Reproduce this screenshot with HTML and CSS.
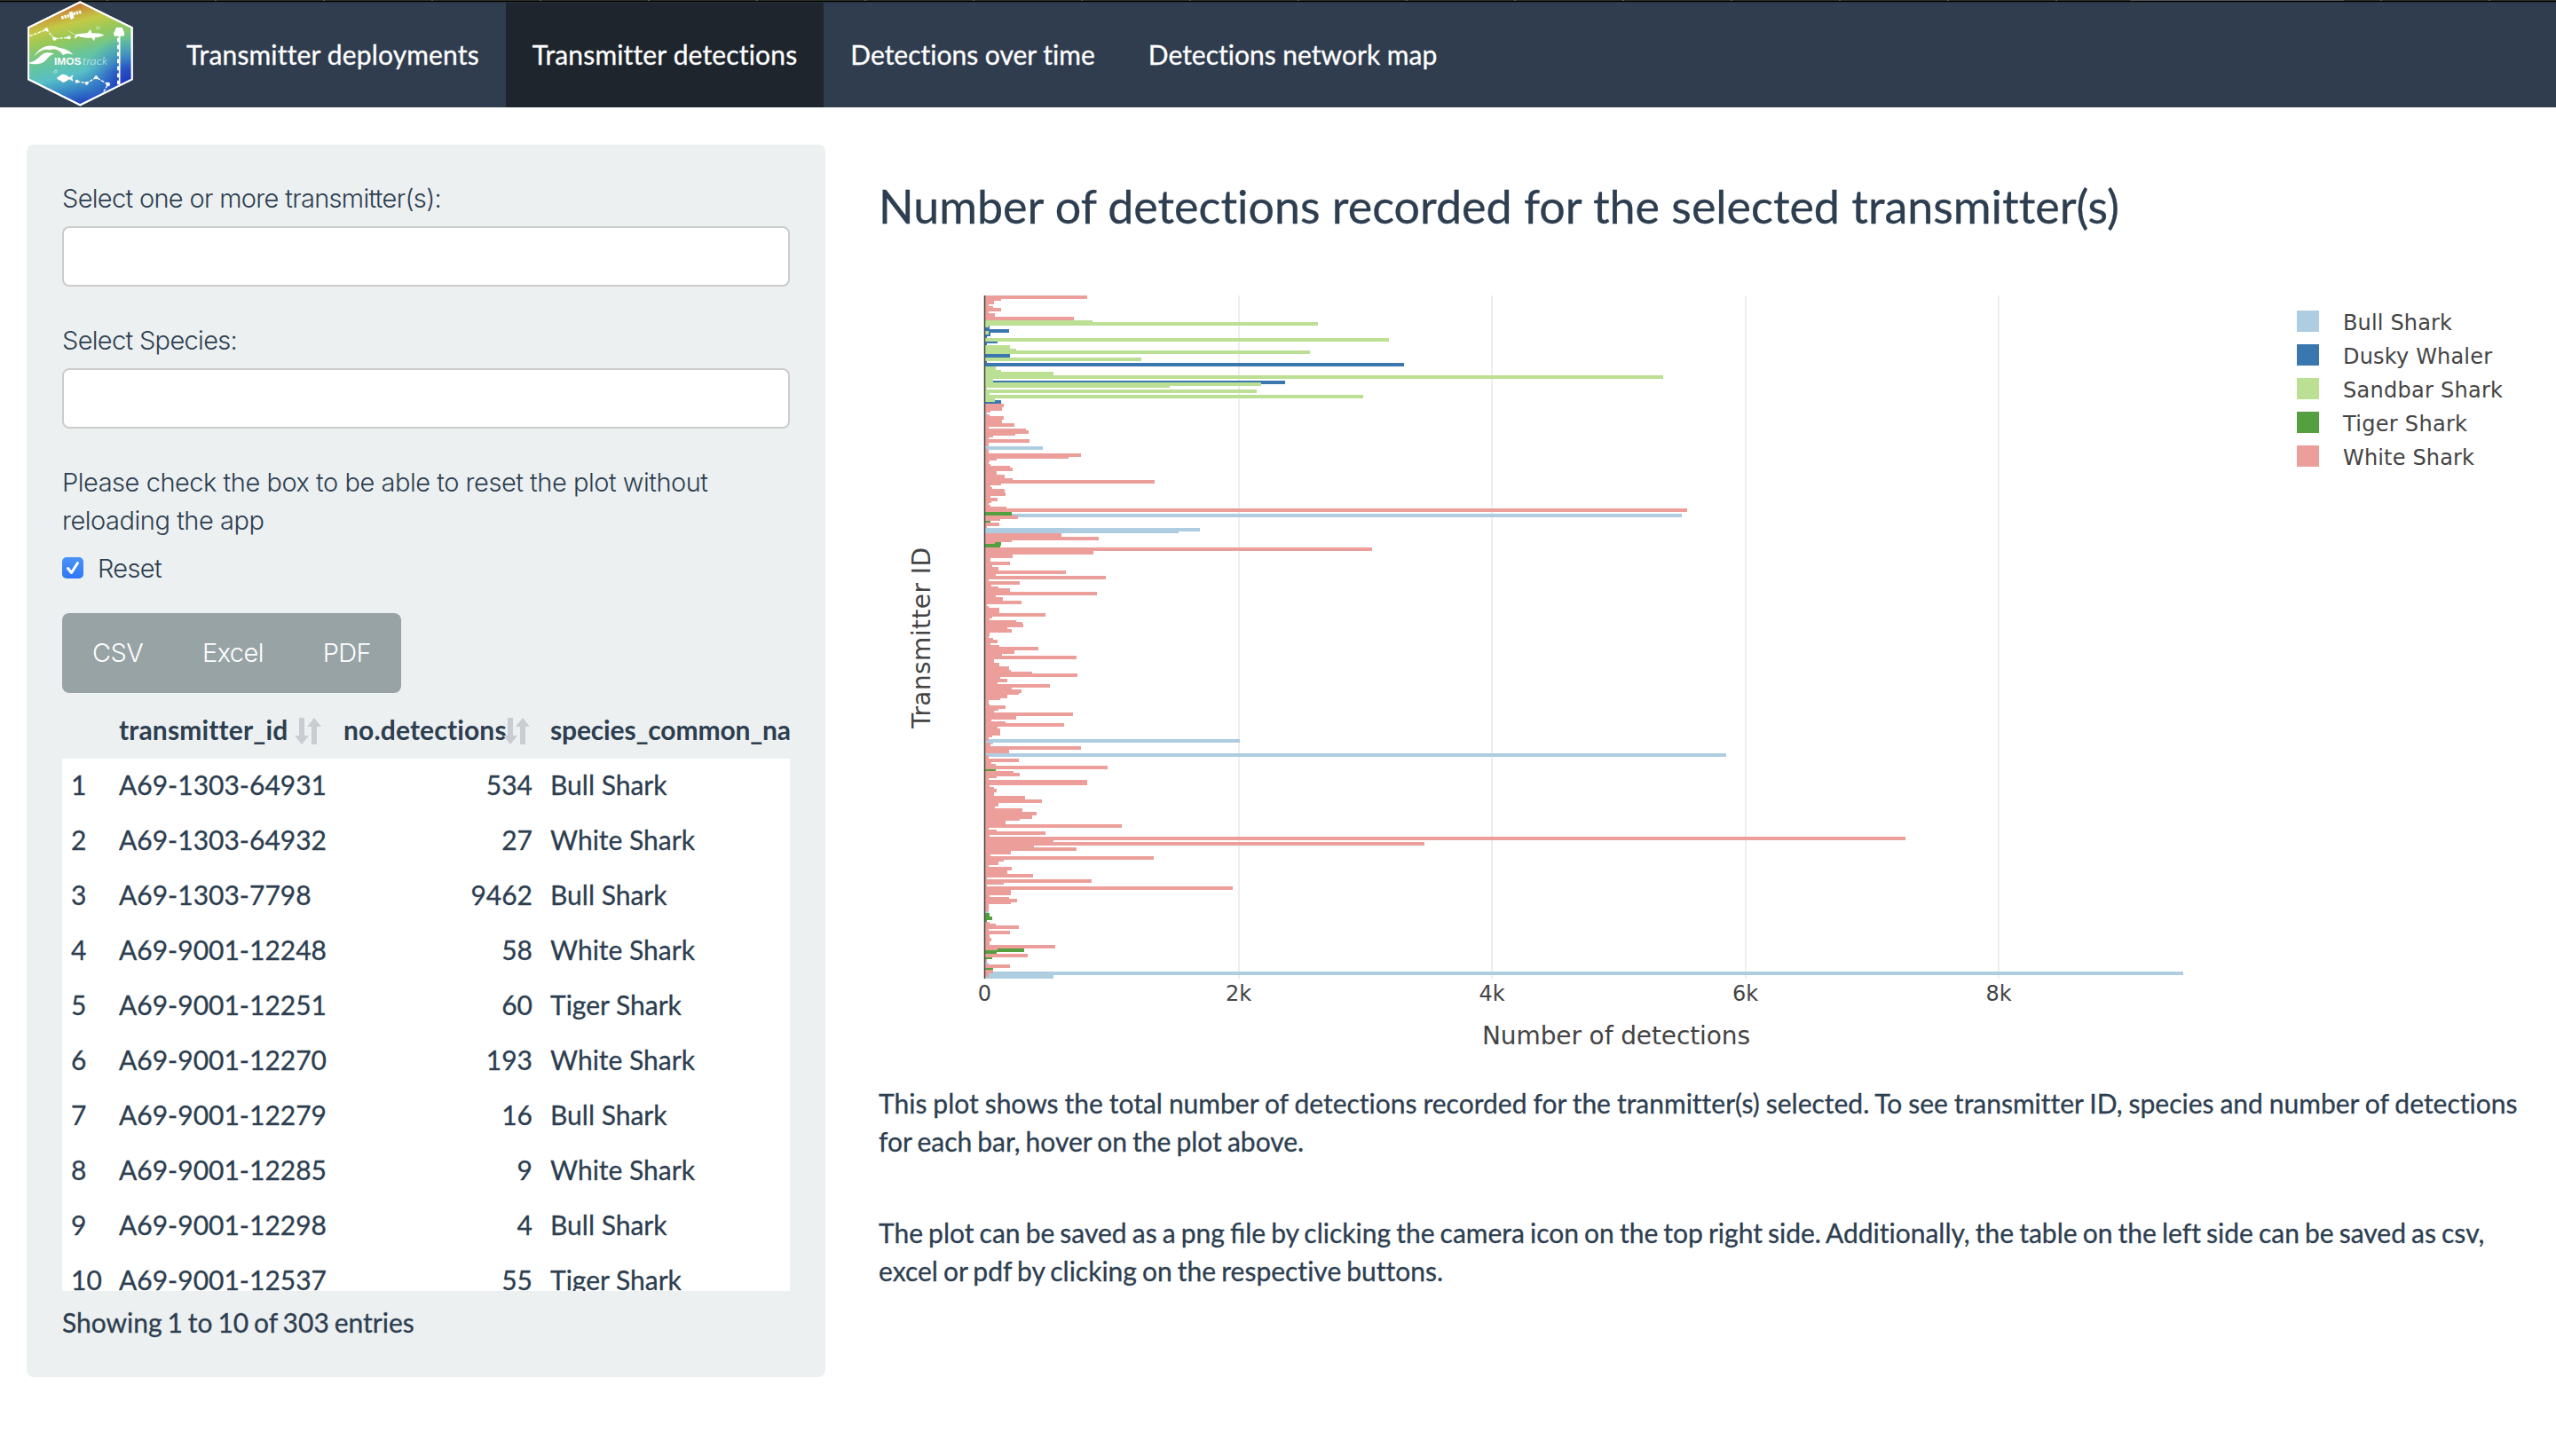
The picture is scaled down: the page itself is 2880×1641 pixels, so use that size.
FILE: index.html
```html
<!DOCTYPE html>
<html lang="en">
<head>
<meta charset="utf-8">
<title>IMOS track</title>
<link rel="stylesheet" href="styles.css">
</head>
<body>
<div class="strip"></div>
<nav class="navbar">
  <a class="brand" href="#">
    <svg class="logo" viewBox="0 0 420 360" role="img" aria-label="IMOS track">
      <defs>
        <linearGradient id="sea" x1="0.42" y1="0" x2="0.68" y2="1">
          <stop offset="0" stop-color="#c5602c"/>
          <stop offset="0.1" stop-color="#c9a03c"/>
          <stop offset="0.19" stop-color="#c3c946"/>
          <stop offset="0.33" stop-color="#93c85c"/>
          <stop offset="0.5" stop-color="#66c59c"/>
          <stop offset="0.66" stop-color="#58bfc6"/>
          <stop offset="0.82" stop-color="#347fc6"/>
          <stop offset="0.95" stop-color="#2140c0"/>
          <stop offset="1" stop-color="#1d36b8"/>
        </linearGradient>
        <radialGradient id="deep" gradientUnits="userSpaceOnUse" cx="385" cy="285" r="170">
          <stop offset="0" stop-color="#1c2cbc"/>
          <stop offset="0.35" stop-color="#2349c2" stop-opacity="0.85"/>
          <stop offset="1" stop-color="#3a8cc8" stop-opacity="0"/>
        </radialGradient>
      </defs>
      <path class="hex" fill="url(#sea)" d="M211 7L386 93V268L211 355L36 268V93Z"/>
      <path class="hex" fill="url(#deep)" d="M211 7L386 93V268L211 355L36 268V93Z"/>
      <g class="dash"><path d="M40 122L97 100L124 131L173 127"/><path d="M200 275L233 281L265 262L305 285L286 318"/></g>
      <path class="mooring" d="M344 120V286"/><path class="mooring-dash" d="M340 128V286"/>
      <g class="ink">
        <circle cx="97" cy="100" r="6"/><circle cx="124" cy="131" r="6"/><circle cx="173" cy="127" r="6"/>
        <circle cx="200" cy="275" r="6"/><circle cx="233" cy="281" r="6"/><circle cx="265" cy="262" r="6"/><circle cx="305" cy="285" r="7"/>
        <path d="M333 93H353L361 113L358 122H327L324 113Z"/>
        <path d="M166 101Q182 108 194 117Q220 112 235 112L246 99L250 112Q280 112 292 118Q282 126 262 127L258 139L250 128Q220 128 204 122Q196 130 190 130L196 120Q180 110 166 101Z"/>
        <path d="M132 264Q140 256 150 251Q164 250 174 262L188 253L184 264L188 275L174 268Q164 276 152 279L146 273Q136 272 132 264Z"/>
        <path d="M55 191C75 158 105 146 139 161C158 164 178 172 187 185C174 180 162 180 153 187C142 168 125 163 108 169C88 163 72 174 55 191Z"/>
        <path d="M40 211C70 208 75 178 101 178C112 178 121 181 123 182C100 187 100 207 79 214C62 219 48 216 40 215Z"/>
        <path d="M173 42L184 38L191 61L179 66Z"/>
      </g>
      <path class="panels" d="M148 60L174 53M188 47L215 40"/>
      <path class="waves" d="M264 93Q272 87 280 96M266 99Q271 94 275 99M134 237Q122 236 121 246M134 243Q127 242 127 248"/>
      <text class="imos" x="123" y="219" textLength="91" lengthAdjust="spacingAndGlyphs">IMOS</text>
      <text class="track" x="218" y="219" textLength="86" lengthAdjust="spacingAndGlyphs">track</text>
    </svg>
  </a>
  <a class="tab wide" href="#">Transmitter deployments</a>
  <a class="tab wide active" href="#">Transmitter detections</a>
  <a class="tab" href="#">Detections over time</a>
  <a class="tab" href="#">Detections network map</a>
</nav>
<div class="page">
  <aside class="sidebar">
    <label class="label" for="tx">Select one or more transmitter(s):</label>
    <input class="field" id="tx" type="text">
    <label class="label" for="sp">Select Species:</label>
    <input class="field" id="sp" type="text">
    <p class="label help">Please check the box to be able to reset the plot without<br>reloading the app</p>
    <div class="label reset">
      <span class="check"><svg viewBox="0 0 24 24"><path d="M6.5 12.5L10.5 17.5L17.5 6.5"/></svg></span>
      <span>Reset</span>
    </div>
    <div class="buttons"><button class="btn">CSV</button><button class="btn">Excel</button><button class="btn">PDF</button></div>
    <div class="thead row">
      <span></span>
      <span class="th">transmitter_id<svg class="sort" viewBox="0 0 30 32"><path d="M5 1H11V21H16L8 31L0 21H5ZM19 31H25V11H30L22 1L14 11H19Z"/></svg></span>
      <span class="th">no.detections<svg class="sort" viewBox="0 0 30 32"><path d="M5 1H11V21H16L8 31L0 21H5ZM19 31H25V11H30L22 1L14 11H19Z"/></svg></span>
      <span class="th last">species_common_na</span>
    </div>
    <div class="tbody">
      <div class="row"><span>1</span><span>A69-1303-64931</span><span class="num">534</span><span>Bull Shark</span></div>
      <div class="row"><span>2</span><span>A69-1303-64932</span><span class="num">27</span><span>White Shark</span></div>
      <div class="row"><span>3</span><span>A69-1303-7798</span><span class="num">9462</span><span>Bull Shark</span></div>
      <div class="row"><span>4</span><span>A69-9001-12248</span><span class="num">58</span><span>White Shark</span></div>
      <div class="row"><span>5</span><span>A69-9001-12251</span><span class="num">60</span><span>Tiger Shark</span></div>
      <div class="row"><span>6</span><span>A69-9001-12270</span><span class="num">193</span><span>White Shark</span></div>
      <div class="row"><span>7</span><span>A69-9001-12279</span><span class="num">16</span><span>Bull Shark</span></div>
      <div class="row"><span>8</span><span>A69-9001-12285</span><span class="num">9</span><span>White Shark</span></div>
      <div class="row"><span>9</span><span>A69-9001-12298</span><span class="num">4</span><span>Bull Shark</span></div>
      <div class="row"><span>10</span><span>A69-9001-12537</span><span class="num">55</span><span>Tiger Shark</span></div>
    </div>
    <div class="info">Showing 1 to 10 of 303 entries</div>
  </aside>
  <main class="main">
    <h1 class="title">Number of detections recorded for the selected transmitter(s)</h1>
    <svg class="chart" viewBox="990 300 1860 900">
      <g class="grid"><path d="M1396 333V1103M1681 333V1103M1967 333V1103M2252 333V1103"/></g>
      <g id="bars" transform="translate(1080 320) scale(.33333333)"></g>
      <path class="axis" d="M1109.5 333V1103"/>
      <g class="tick">
        <text x="1109.5" y="1128">0</text><text x="1395.500" y="1128">2k</text><text x="1681" y="1128">4k</text><text x="1966.500" y="1128">6k</text><text x="2252" y="1128">8k</text>
      </g>
      <text class="axis-title" x="1670" y="1177" textLength="302">Number of detections</text>
      <text class="axis-title" transform="translate(1048 821) rotate(-90)" x="0" y="0" textLength="204">Transmitter ID</text>
      <g class="legend">
        <rect class="b" x="2588" y="350" width="25" height="24"/><text x="2640" y="372" textLength="123">Bull Shark</text>
        <rect class="d" x="2588" y="388" width="25" height="24"/><text x="2640" y="410" textLength="168">Dusky Whaler</text>
        <rect class="s" x="2588" y="426" width="25" height="24"/><text x="2640" y="448" textLength="180">Sandbar Shark</text>
        <rect class="t" x="2588" y="464" width="25" height="24"/><text x="2640" y="486" textLength="140">Tiger Shark</text>
        <rect class="w" x="2588" y="502" width="25" height="24"/><text x="2640" y="524" textLength="148">White Shark</text>
      </g>
    </svg>
    <p class="note"><span class="loose">This plot shows the total number of detections recorded for the tranmitter(s) selected. To see transmitter ID, species and number of detections</span><br>for each bar, hover on the plot above.</p>
    <p class="note">The plot can be saved as a png <span class="liga">file</span> by clicking the camera icon on the top right side. Additionally, the table on the left side can be saved as csv,<br>excel or pdf by clicking on the respective buttons.</p>
  </main>
</div>
<script src="chart.js"></script>
</body>
</html>
```
FILE: styles.css
```css
* { box-sizing: border-box; }
body { margin: 0; background: #fff; color: #2c3e50; font: 30px/42.86px Lato, sans-serif; font-variant-ligatures: none; -webkit-text-stroke: 0.3px; overflow: hidden; }
p, h1 { margin: 0; }
svg { -webkit-text-stroke: 0; }
.strip { height: 2px; border-bottom: 1px solid #000; background: linear-gradient(90deg, transparent 2400px, #4d5455 2400px, #4d5455 2641px, transparent 2641px), repeating-linear-gradient(90deg, #2b2f28 0 120px, #5a5e5a 120px 122px); }
.navbar { display: flex; height: 119px; padding-left: 30px; background: #303d4f; border-top: 1px solid #272f3c; }
.brand { width: 150px; flex: none; }
.logo { display: block; width: 140px; height: 120px; margin: -3px 0 0 -10px; }
.hex { stroke: #fff; stroke-width: 6; }
.dash path { fill: none; stroke: #fff; stroke-width: 4; stroke-dasharray: 11 4; }
.mooring { stroke: #fff; stroke-width: 5; }
.mooring-dash { stroke: #fff; stroke-width: 8; stroke-dasharray: 14 10; }
.panels { fill: none; stroke: #fff; stroke-width: 11; stroke-dasharray: 7 3; }
.ink { fill: #fff; }
.waves { fill: none; stroke: #dff; stroke-width: 2; }
.imos { font: bold 34px "Liberation Sans", sans-serif; fill: #fff; }
.track { font: italic 300 36px Lato, sans-serif; fill: #d5f0f4; }
.tab { display: flex; align-items: center; padding: 0 30px 1px; color: #fff; text-decoration: none; white-space: nowrap; }
.tab.wide { letter-spacing: 0.16px; }
.tab.active { background: #1e252d; }
.page { display: flex; align-items: flex-start; padding: 42px 30px 0; gap: 60px; }
.sidebar { width: 900px; height: 1389px; flex: none; padding: 40px 40px 0; background: #ecf0f1; border-radius: 8px; overflow: hidden; }
.label { display: block; height: 43px; font-family: Inter, "Liberation Sans", sans-serif; font-weight: 300; font-size: 29px; letter-spacing: -0.68px; white-space: nowrap; -webkit-text-stroke: 0; }
.field { display: block; width: 820px; height: 68px; margin: 9px 0 40px; border: 2px solid #ccc; border-radius: 8px; background: #fff; }
.help { height: 86px; letter-spacing: -0.47px; }
.reset { display: flex; gap: 16px; align-items: center; margin: 11px 0 28px; }
.check { display: block; width: 24px; height: 24px; margin-top: -4px; border-radius: 5px; background: linear-gradient(#4a93f8, #2f76f5); }
.check svg { display: block; width: 24px; height: 24px; fill: none; stroke: #fff; stroke-width: 3; stroke-linecap: round; stroke-linejoin: round; }
.buttons { display: flex; justify-content: space-between; width: 382px; height: 90px; padding: 0 34px; border-radius: 8px; background: #98a3a5; }
.btn { border: 0; background: none; color: #fff; padding: 0; font: 300 29px/90px Inter, "Liberation Sans", sans-serif; letter-spacing: -0.6px; -webkit-text-stroke: 0; }
.row { display: grid; grid-template-columns: 54px 253px 222px 1fr; height: 62px; line-height: 58px; padding-left: 10px; white-space: nowrap; }
.row .num { text-align: right; padding-right: 9px; }
.row > span:last-child { padding-left: 11px; }
.thead { height: 74px; line-height: 83px; font-weight: bold; -webkit-text-stroke: 0; }
.thead .th { display: flex; align-items: center; letter-spacing: 0.15px; }
.thead .th.last { display: block; letter-spacing: -0.15px; }
.sort { width: 30px; height: 32px; margin: 2px 0 0 8px; fill: #c9cdd2; flex: none; }
.th:nth-child(3) .sort { margin-left: -4px; }
.tbody { height: 600px; overflow: hidden; background: #fff; }
.info { padding-top: 14px; word-spacing: -1.8px; }
.main { width: 1860px; }
.title { font-size: 52px; font-weight: 400; line-height: 60px; margin: 39px 0 38px; white-space: nowrap; }
.chart { display: block; width: 1860px; height: 900px; margin-bottom: 22px; }
.note { height: 86px; margin-bottom: 60px; white-space: nowrap; word-spacing: -1.6px; }
.loose { word-spacing: -0.75px; }
.liga { font-variant-ligatures: normal; }
.grid path { stroke: #eee; stroke-width: 2; }
.axis { stroke: #444; stroke-width: 1.5; }
.tick, .legend text { font: 24px "DejaVu Sans", Verdana, sans-serif; fill: #444; }
.tick { text-anchor: middle; }
.axis-title { font: 28px "DejaVu Sans", Verdana, sans-serif; fill: #444; }
.b { fill: #aecde1; }
.d { fill: #3b77af; }
.s { fill: #bbdf93; }
.t { fill: #549f3f; }
.w { fill: #ec9f9a; }
#bars { shape-rendering: crispEdges; }
```
FILE: chart.js
```js
// Bars partly covered by their neighbours: top, bottom, right edge, species
const behind = [
  [141,153,105,'d'],[159,165,171,'d'],[165,177,108,'d'],[327,339,1104,'d'],[393,405,144,'d'],
  [549,561,285,'b'],[777,789,2445,'b'],[873,885,144,'t'],[1539,1551,950,'b'],[1551,1557,116,'b'],
  [1587,1599,2595,'b'],[2247,2259,221,'t'],[2325,2337,4140,'b'],[2337,2349,320,'b']
];
// Front bars stacked from the top: bottom edge, right edge, species (white shark by default)
const groups = [
  [0, 39, '51 434,57 144,69 120,75 102,81 117,93 144,99 102,111 123,123 389,129 452 s,141 1216 s,147 102 s,153 105 d,159 171 d,171 102 s,177 108 d,183 96 d,195 1455 s,201 132 d,207 96 d,219 174 s,225 195 s,237 1187 s,249 174 d,261 617 s,267 96 d,279 1505 d,291 126 s,297 144 s,309 321 s,321 2382 s,333 117 s,345 1022 s,351 713 s,357 96 s,369 1007 s,375 105 s,387 1367 s,399 123 s,405 144 d,417 152,429 147,435 107,441 96 b,447 105,459 153,471 146,483 188,489 102,495 228,507 236,513 191,519 117,525 102,537 239,549 102,555 285 b,561 96,573 102,585 414,591 371,597 129,603 105,609 102,615 108,621 174,633 183,645 128,657 156,663 183,675 663,681 143,687 108,693 114,705 156,717 159,723 107,735 132,741 111,747 102,753 108,759 162,771 2463,783 179 t,795 200,801 141,807 108 t'],
  [750, 57, '69 138,75 96,87 816 b,93 743 b,105 348,117 474,123 180,129 123,135 144 t,141 141 t,153 1398,165 455,177 183,189 107,201 174,207 113,219 134,231 363,237 126,249 497,255 102,267 207,273 110,279 135,291 174,303 468,309 126,321 150,333 212,339 96,345 102,357 137,363 138,375 293,381 113,387 105,393 194,399 216,411 218,417 165,429 180,441 105,447 102,453 116,465 132,471 107,477 137,489 270,501 188,507 147,519 399,531 119,543 138,555 170,561 176,567 248,579 402,585 140,597 164,603 131,615 309,621 180,633 212,639 203,651 164,657 140,669 102,675 104,687 158,693 134,699 119,711 387,723 195,729 110,735 158,747 356,753 132,777 140,783 113,795 102,801 950 b'],
  [1500, 51, '63 108,75 414,87 171,93 2595 b,105 102,117 203,123 110,129 126,141 503,147 126 t,153 185,165 207,171 129,177 102,183 434,195 435,201 104,207 119,219 128,231 120,243 224,255 282,267 135,273 122,285 216,297 263,309 248,315 206,327 158,339 551,345 102,351 128,363 294,369 104,381 3201,387 320,399 1575,405 255,417 399,429 177,435 107,447 659,453 153,465 135,471 102,483 179,495 165,507 252,513 96,525 449,531 152,537 96,549 927,567 177,573 105,579 171,591 198,597 177,621 102,627 102 b,639 105 t,651 113 t,657 96 t,663 104,669 125,681 203,687 102,699 173,711 105,723 110,735 105,747 326,753 131,759 221 t,765 128 t,777 233,783 113 t,795 96,801 102 b,813 173,819 116 t,831 116,843 102,849 320 b']
];
const bars = document.getElementById('bars');
function bar(top, bottom, right, species) {
  const r = document.createElementNS('http://www.w3.org/2000/svg', 'rect');
  r.setAttribute('x', 90);
  r.setAttribute('y', top);
  r.setAttribute('width', right - 90);
  r.setAttribute('height', bottom - top);
  r.setAttribute('class', species);
  bars.appendChild(r);
}
behind.forEach(b => bar(...b));
groups.forEach(([offset, start, list]) => {
  let top = start;
  list.split(',').forEach(item => {
    const [bottom, right, species] = item.split(' ');
    bar(offset + top, offset + Number(bottom), Number(right), species || 'w');
    top = Number(bottom);
  });
});
```
